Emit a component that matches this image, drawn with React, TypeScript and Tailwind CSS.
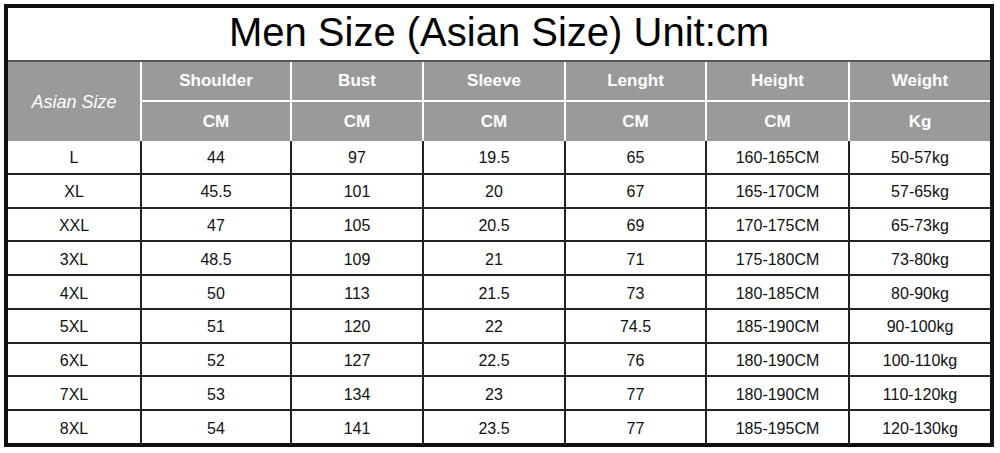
const cols = "grid grid-cols-[134px_150px_132px_142px_141px_143px_1fr]";

const heads = ["Shoulder", "Bust", "Sleeve", "Lenght", "Height", "Weight"];
const units = ["CM", "CM", "CM", "CM", "CM", "Kg"];

const rows = [
  ["L", "44", "97", "19.5", "65", "160-165CM", "50-57kg"],
  ["XL", "45.5", "101", "20", "67", "165-170CM", "57-65kg"],
  ["XXL", "47", "105", "20.5", "69", "170-175CM", "65-73kg"],
  ["3XL", "48.5", "109", "21", "71", "175-180CM", "73-80kg"],
  ["4XL", "50", "113", "21.5", "73", "180-185CM", "80-90kg"],
  ["5XL", "51", "120", "22", "74.5", "185-190CM", "90-100kg"],
  ["6XL", "52", "127", "22.5", "76", "180-190CM", "100-110kg"],
  ["7XL", "53", "134", "23", "77", "180-190CM", "110-120kg"],
  ["8XL", "54", "141", "23.5", "77", "185-195CM", "120-130kg"],
];

export default function App() {
  return (
    <main className="h-[453px] w-[1000px] bg-white pl-1 pt-1 font-['Liberation_Sans',Arial,sans-serif]">
      <div className="flex h-[443px] w-[990px] flex-col border-4 border-[#111]">
        <div className="flex h-[54px] items-center justify-center border-b-2 border-[#555] pb-[5px] text-[40px] leading-none text-black">
          Men Size (Asian Size) Unit:cm
        </div>

        <div className={`${cols} grid-rows-[40px_39px] bg-[#9a9a9a] text-white`}>
          <div className="row-span-2 flex items-center justify-center border-r-2 border-white pt-[2px] text-[18px] italic">
            Asian Size
          </div>
          {heads.map((h, i) => (
            <div
              key={h}
              className={`flex items-center justify-center border-b-2 border-white text-[17px] font-bold ${i < 5 ? "border-r-2" : ""}`}
            >
              {h}
            </div>
          ))}
          {units.map((u, i) => (
            <div
              key={i}
              className={`flex items-center justify-center border-white text-[17px] font-bold ${i < 5 ? "border-r-2" : ""}`}
            >
              {u}
            </div>
          ))}
        </div>

        <div className="flex flex-1 flex-col text-[16px] text-[#111]">
          {rows.map((r, ri) => (
            <div key={r[0]} className={`${cols} flex-1 ${ri > 0 ? "border-t-2 border-[#222]" : ""}`}>
              {r.map((c, ci) => (
                <div
                  key={ci}
                  className={`flex items-center justify-center pt-[3px] ${ci < 6 ? "border-r-2 border-[#222]" : ""}`}
                >
                  {c}
                </div>
              ))}
            </div>
          ))}
        </div>
      </div>
    </main>
  );
}
